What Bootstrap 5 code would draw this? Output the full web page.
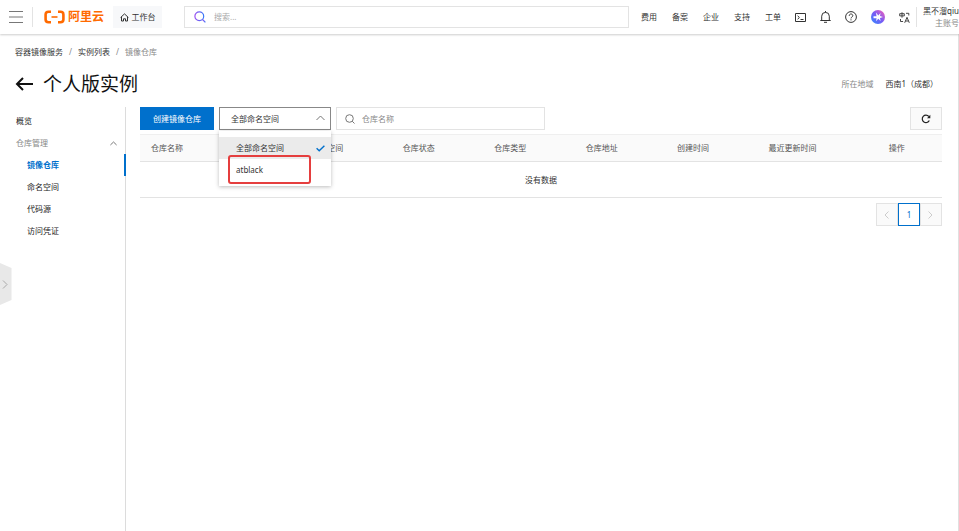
<!DOCTYPE html>
<html lang="zh-CN">
<head>
<meta charset="utf-8">
<meta name="viewport" content="width=device-width, initial-scale=1">
<title>个人版实例 - 容器镜像服务</title>
<link href="https://cdn.jsdelivr.net/npm/bootstrap@5.3.0/dist/css/bootstrap.min.css" rel="stylesheet">
<style>
body{font-family:"Noto Sans","Noto Sans CJK SC",sans-serif;font-size:8px;line-height:12px;color:#333;background:#fff}
a{color:inherit;text-decoration:none}
svg{display:block;flex:none}
.topbar{height:34px;box-shadow:0 1px 2px #0003;z-index:5}
.menu-btn{width:33px;height:20px;padding-left:9px!important;border-right:1px solid #e3e3e3!important}
.brand{width:80px;padding-left:11px;color:#ff6a00;font-size:12px;line-height:20px;font-weight:700;gap:3px}
.workbench{height:22px;width:49px;background:#f7f8fa;gap:3px}
.field{height:23px;border:1px solid #e3e3e3;background:#fff}
.field input{font-size:8px;line-height:12px;outline:0;color:#333}
.field input::placeholder{color:#888;opacity:1}
.site-search{height:22px;margin-left:22px;margin-right:12px;padding-left:9px;gap:8px}
.site-search input::placeholder{color:#aaa}
.links{gap:15px;margin-right:14px}
.tools{gap:14px}
.account{width:43px;height:20px;margin-left:6px;padding-left:6px;border-left:1px solid #e3e3e3}
.page{border-right:1px solid #e0e0e0}
.crumbs{padding:12px 15px 0;gap:6px}
.heading{padding:12px 20px 0 15px;height:49px}
.heading h1{font-size:19px;line-height:28px;font-weight:400;color:#111}
.sidebar{width:126px;border-right:1px solid #dcdcdc;padding-top:3px;color:#222}
.sidebar a,.sidebar button{height:22px;padding:0 0 0 16px;font-size:8px;line-height:22px;display:block}
.sidebar .sub{padding-left:27px}
.sidebar .current{color:#0070cc;font-weight:700;border-right:2px solid #0070cc;margin-right:-1px}
.drawer-tab{left:0;top:263px;width:12px;height:42px;z-index:4}
.content{padding:0 16px 0 14px}
.filters{gap:5px}
.create{width:74px;height:23px;background:#0070cc;color:#fff;font-size:8px;line-height:12px}
.ns{width:112px}
.ns select{height:23px;border:1px solid #888;padding:0 11px;font-size:8px;line-height:12px;appearance:none;color:#333;background:#fff}
.ns>svg{right:6px;top:8px}
.ns-menu{top:24px;left:0;width:112px;padding:6px 0 5px;background:#fff;box-shadow:0 1px 4px #0004;z-index:3}
.ns-menu button{height:22px;padding:0 6px 0 17px;font-size:8px;line-height:12px;color:#333}
.ns-menu .chosen{background:#ebebeb}
.highlight{left:9px;top:24px;width:83px;height:29px;border:2px solid #e53e3e;border-radius:3px;pointer-events:none}
.repo-search{width:209px;padding-left:8px;gap:7px}
.refresh{width:32px;height:23px;border:1px solid #e3e3e3;background:#fafafa}
.repos{table-layout:fixed;margin:4px 0 5px}
.repos th{height:27px;padding:0 11px;background:#fafafa;border-top:1px solid #efefef;border-bottom:1px solid #e3e3e3;font-weight:400;color:#555}
.repos td{height:36px;padding:0;border-bottom:1px solid #e3e3e3}
.c-name{width:20%}.c-time{width:15%}.c-ops{width:8%}
.pager button{width:22px;height:23px;border:1px solid #e3e3e3;background:#fafafa;font-size:8px;line-height:12px}
.pager .on{border-color:#0070cc;background:#fff;color:#0070cc}
.muted{color:#888}
</style>
</head>
<body class="d-flex flex-column min-vh-100 overflow-hidden">
<header class="topbar d-flex align-items-center bg-white position-relative">
  <button class="menu-btn btn border-0 rounded-0 p-0 d-flex align-items-center" aria-label="菜单"><svg width="14" height="12" viewBox="0 0 14 12" stroke="#777" fill="none"><path d="M0 .5h14M0 6h14M0 11.5h14"/></svg></button>
  <a class="brand d-flex align-items-center" href="#"><svg width="21" height="14" viewBox="0 0 21 14" fill="none" stroke="#ff6a00"><path stroke-width="2.6" d="M7 1.8H4.5Q1.6 1.8 1.6 4.5v5Q1.6 12.2 4.5 12.2H7M14 1.8h2.5Q19.4 1.8 19.4 4.5v5Q19.4 12.2 16.5 12.2H14"/><path stroke-width="1.6" d="M7.5 7h6"/></svg><span>阿里云</span></a>
  <a class="workbench d-flex align-items-center justify-content-center" href="#"><svg width="9" height="9" viewBox="0 0 9 9" fill="none" stroke="#333"><path d="M.6 4.5 4.5.9l3.9 3.6M1.5 4v4h2V5.8h2V8h2V4"/></svg>工作台</a>
  <label class="field site-search d-flex align-items-center flex-fill"><svg width="12" height="12" viewBox="0 0 12 12" fill="none" stroke="url(#sg)" stroke-width="1.2"><defs><linearGradient id="sg"><stop stop-color="#9a50f0"/><stop offset="1" stop-color="#3978f6"/></linearGradient></defs><circle cx="5.3" cy="5.3" r="4.4"/><path d="m8.5 8.5 2.9 2.9"/></svg><input class="border-0 p-0 flex-fill bg-transparent" type="text" placeholder="搜索..." aria-label="搜索"></label>
  <nav class="links d-flex"><a href="#">费用</a><a href="#">备案</a><a href="#">企业</a><a href="#">支持</a><a href="#">工单</a></nav>
  <div class="tools d-flex align-items-center">
    <a href="#" aria-label="终端"><svg width="11" height="11" viewBox="0 0 11 11" fill="none" stroke="#333"><path d="M.5 1.5h10v8H.5zM2.6 3.8l1.8 1.7-1.8 1.7M5.5 7.5h3"/></svg></a>
    <a href="#" aria-label="消息"><svg width="11" height="12" viewBox="0 0 11 12" fill="none" stroke="#333"><path d="M.3 9.5h10.4M1.7 9.3V5.2a3.8 3.8 0 0 1 7.6 0v4.1M4 11.3h3M5.5 0v1.5"/></svg></a>
    <a href="#" aria-label="帮助"><svg width="12" height="12" viewBox="0 0 12 12" fill="none" stroke="#333"><circle cx="6" cy="6" r="5.4"/><path d="M4.2 4.8C4.2 2.4 7.8 2.4 7.8 4.7 7.8 6 6 6 6 7.4M6 8.3v1.1"/></svg></a>
    <a href="#" aria-label="AI 助理"><svg width="14" height="14" viewBox="0 0 14 14"><defs><linearGradient id="ai" x1="0" x2="1" y1="1" y2="0"><stop stop-color="#2f8bff"/><stop offset=".5" stop-color="#785cf5"/><stop offset="1" stop-color="#ff5fb4"/></linearGradient></defs><circle cx="7" cy="7" r="7" fill="url(#ai)"/><path d="m5 2.5 2.3 2.9L9.5 3 9 6l3 1-3 1 .6 3-2.3-2.2L5 11.3l.6-3L2.5 8.2v-2h3z" fill="#fff"/></svg></a>
    <a href="#" aria-label="语言"><svg width="11" height="11" viewBox="0 0 11 11" fill="none" stroke="#333" stroke-width=".9"><path d="M.7 1.7h4.6v2.2H.7zM3 .3v5.4M7 1.3h2.8v2.2M1.5 7v2.5h2.6M5.7 10.8 8 5.3l2.3 5.5M6.6 9h2.8"/></svg></a>
  </div>
  <a class="account d-flex flex-column justify-content-center overflow-hidden text-nowrap" href="#"><span>黑不溜qiu</span><span class="muted align-self-end">主账号</span></a>
</header>
<div class="page flex-fill d-flex flex-column">
  <nav aria-label="面包屑"><ol class="crumbs d-flex list-unstyled m-0"><li><a href="#">容器镜像服务</a></li><li class="muted">/</li><li><a href="#">实例列表</a></li><li class="muted">/</li><li class="muted">镜像仓库</li></ol></nav>
  <div class="heading d-flex align-items-start justify-content-between">
    <div class="d-flex align-items-center gap-2"><a href="#" aria-label="返回"><svg width="20" height="16" viewBox="0 0 20 16" fill="none" stroke="#111" stroke-width="2"><path d="M18 8H2M8 2 2 8l6 6"/></svg></a><h1 class="m-0">个人版实例</h1></div>
    <div class="d-flex mt-2 gap-2"><span class="muted me-1">所在地域</span><span>西南1（成都）</span></div>
  </div>
  <div class="flex-fill d-flex">
    <nav class="sidebar flex-shrink-0">
      <a href="#">概览</a>
      <button class="btn border-0 rounded-0 w-100 d-flex align-items-center justify-content-between muted" aria-expanded="true">仓库管理<svg class="me-2" width="7" height="5" viewBox="0 0 7 5" fill="none" stroke="#777"><path d="m.4 4 3.1-3 3.1 3"/></svg></button>
      <a class="sub current" href="#">镜像仓库</a>
      <a class="sub" href="#">命名空间</a>
      <a class="sub" href="#">代码源</a>
      <a class="sub" href="#">访问凭证</a>
    </nav>
    <main class="content flex-fill">
      <div class="filters d-flex">
        <button class="create btn rounded-0 border-0 p-0">创建镜像仓库</button>
        <div class="ns position-relative">
          <select class="w-100 rounded-0 d-block" aria-label="命名空间"><option>全部命名空间</option><option>atblack</option></select>
          <svg class="position-absolute" width="9" height="6" viewBox="0 0 9 6" fill="none" stroke="#777"><path d="m.5 5 4-4 4 4"/></svg>
          <div class="ns-menu position-absolute">
            <button class="chosen btn border-0 rounded-0 w-100 d-flex align-items-center justify-content-between">全部命名空间<svg width="9" height="7" viewBox="0 0 9 7" fill="none" stroke="#0070cc" stroke-width="1.4"><path d="m.6 3.3 2.6 2.5L8.4.7"/></svg></button>
            <button class="btn border-0 rounded-0 w-100 d-flex align-items-center">atblack</button>
            <div class="highlight position-absolute"></div>
          </div>
        </div>
        <label class="field repo-search d-flex align-items-center"><svg width="10" height="10" viewBox="0 0 10 10" fill="none" stroke="#777"><circle cx="4.5" cy="4.5" r="3.8"/><path d="m7.2 7.2 2.3 2.3"/></svg><input class="border-0 p-0 flex-fill" type="text" placeholder="仓库名称" aria-label="仓库名称"></label>
        <button class="refresh btn rounded-0 p-0 ms-auto d-flex align-items-center justify-content-center" aria-label="刷新"><svg width="10" height="10" viewBox="0 0 10 10" fill="none" stroke="#222" stroke-width="1.2"><path d="M8.3 6.5A3.7 3.7 0 1 1 7.8 2.5"/><path d="M9.3.8v3.4H6z" fill="#222" stroke="none"/></svg></button>
      </div>
      <table class="repos w-100">
        <thead><tr><th class="c-name">仓库名称</th><th>命名空间</th><th>仓库状态</th><th>仓库类型</th><th>仓库地址</th><th>创建时间</th><th class="c-time">最近更新时间</th><th class="c-ops">操作</th></tr></thead>
        <tbody><tr><td colspan="8" class="text-center">没有数据</td></tr></tbody>
      </table>
      <nav class="pager d-flex justify-content-end" aria-label="分页">
        <button class="btn rounded-0 p-0 d-flex align-items-center justify-content-center" aria-label="上一页"><svg width="5" height="8" viewBox="0 0 5 8" fill="none" stroke="#ccc"><path d="M4.5.5 1 4l3.5 3.5"/></svg></button>
        <button class="on btn rounded-0 p-0" aria-current="page">1</button>
        <button class="btn rounded-0 p-0 d-flex align-items-center justify-content-center" aria-label="下一页"><svg width="5" height="8" viewBox="0 0 5 8" fill="none" stroke="#ccc"><path d="M.5.5 4 4 .5 7.5"/></svg></button>
      </nav>
    </main>
  </div>
</div>
<button class="drawer-tab position-absolute border-0 p-0 bg-transparent" aria-label="展开"><svg width="12" height="42" viewBox="0 0 12 42"><path d="M0 0 11.5 5v32L0 42z" fill="#e8e8e8"/><path d="m3 17.5 4 4-4 4" fill="none" stroke="#aaa"/></svg></button>
<script src="https://cdn.jsdelivr.net/npm/bootstrap@5.3.0/dist/js/bootstrap.bundle.min.js"></script>
</body>
</html>
